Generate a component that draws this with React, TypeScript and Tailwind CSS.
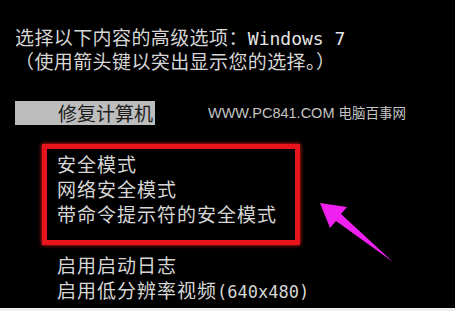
const cjk = "font-['Noto_Sans_CJK_SC',sans-serif]";

const safeModes = ["安全模式", "网络安全模式", "带命令提示符的安全模式"];

function Arrow() {
  return (
    <svg className="absolute left-0 top-0" width="455" height="311" viewBox="0 0 455 311">
      <polygon
        points="320,203 347,207 341,214 393,262 336,221 330,228"
        fill="#f020f0"
      />
    </svg>
  );
}

export default function App() {
  return (
    <div className={`relative w-[455px] h-[311px] bg-black overflow-hidden ${cjk}`}>
      <div className="h-[308px] overflow-hidden text-[#d6d6d6] text-[19px]">
        <div className="pt-[26px] pl-[15px] leading-[22px] tracking-[0.4px]">
          <div>
            选择以下内容的高级选项：
            <span className="font-['DejaVu_Sans_Mono',monospace] text-[18px] text-[#e4e4e4] tracking-normal">Windows 7</span>
          </div>
          <div>（使用箭头键以突出显示您的选择。）</div>
        </div>

        <div className="mt-[29px] flex items-center">
          <div className="ml-[15px] w-[140px] h-[24px] bg-[#bdbdbd] flex items-center justify-end pr-[2px] text-[#1c1c1c] leading-[24px]">
            修复计算机
          </div>
          <div className="ml-[53px] text-[14.5px] text-[#c4c4c4] font-['Liberation_Sans','Noto_Sans_CJK_SC',sans-serif]">
            WWW.PC841.COM <span className={`${cjk} text-[13.5px]`}>电脑百事网</span>
          </div>
        </div>

        <div className="mt-[19px] ml-[42px] w-[258px] h-[101px] border-[5px] border-[#e8141b] shadow-[0_0_4px_#ff2020] pt-[2px] pl-[10px] leading-[25px] tracking-[1px]">
          {safeModes.map((m) => (
            <div key={m}>{m}</div>
          ))}
        </div>

        <div className="mt-[7px] pl-[57px] leading-[25px] tracking-[1px]">
          <div>启用启动日志</div>
          <div>
            启用低分辨率视频
            <span className="font-['DejaVu_Sans_Mono',monospace] text-[17px] tracking-normal">(640x480)</span>
          </div>
          <div>最近一次的正确配置（高级）</div>
        </div>
      </div>
      <div className="h-[3px] bg-[#eeeeee]" />
      <Arrow />
    </div>
  );
}
